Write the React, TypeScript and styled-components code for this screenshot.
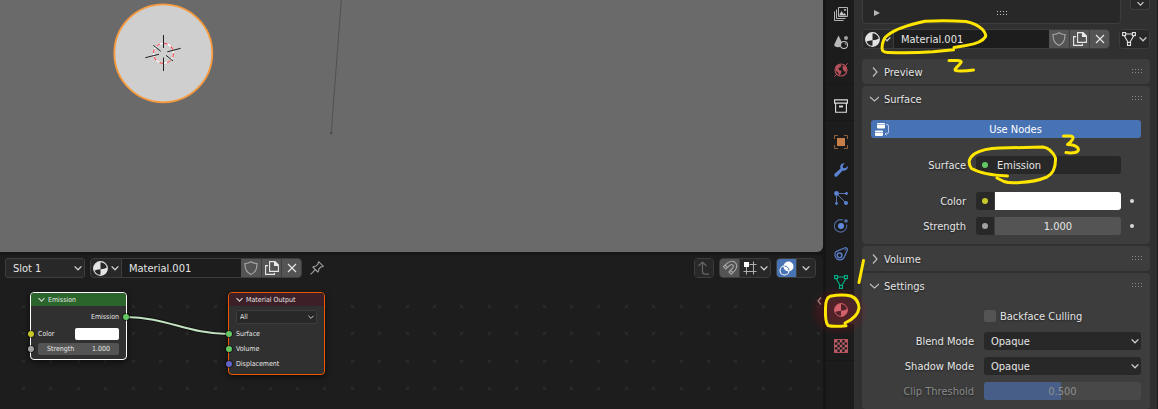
import React from "react";
import styled, { createGlobalStyle, css } from "styled-components";

const GlobalStyle = createGlobalStyle`
  * { box-sizing: border-box; }
  html, body { margin: 0; background: #161616; }
  body, button, input, select {
    font-family: "DejaVu Sans Condensed", "DejaVu Sans", sans-serif;
    font-size: 11px;
    line-height: 14px;
    color: #e5e5e5;
  }
  button, input, select { margin: 0; padding: 0; border: 0; background: none; outline: none; border-radius: 0; }
  svg { display: block; flex: none; }
`;

/* ---------- shell ---------- */

const Window = styled.div`
  display: flex;
  min-height: 100vh;
  overflow: hidden;
`;
const Workspace = styled.main`
  flex: 1;
  min-width: 0;
  display: flex;
  flex-direction: column;
  gap: 3px;
`;
const Viewport = styled.section`
  height: 252px;
  background: #6a6a6a;
  border-bottom-right-radius: 6px;
  overflow: hidden;
`;
const NodeEditor = styled.section`
  flex: 1;
  display: flex;
  flex-direction: column;
  background: #1d1d1d;
  border-radius: 0 6px 0 0;
`;
const EditorHeader = styled.header`
  display: flex;
  align-items: center;
  gap: 5px;
  padding: 3px 7px 3px 5px;
`;
const Spacer = styled.div`
  flex: 1;
`;
const Sidebar = styled.aside`
  position: relative;
  display: flex;
  width: 335px;
  padding-left: 3px;
`;

/* ---------- header widgets ---------- */

const Group = styled.div<{ $width?: number }>`
  display: flex;
  height: 20px;
  border: 1px solid #3d3d3d;
  border-radius: 4px;
  overflow: hidden;
  background: #282828;
  ${(p) => p.$width && css`width: ${p.$width}px;`}
`;
const Cell = styled.button<{ $width?: number; $tone?: "raised" | "active" | "dim" }>`
  display: flex;
  align-items: center;
  justify-content: center;
  gap: 3px;
  width: ${(p) => p.$width ?? 20}px;
  flex: none;
  background: ${(p) => (p.$tone === "raised" ? "#545454" : p.$tone === "active" ? "#4772b3" : "#282828")};
  & + & { border-left: 1px solid #3d3d3d; }
`;
const NameInput = styled.input`
  flex: 1;
  min-width: 0;
  padding: 2px 7px 0;
  background: #1d1d1d;
  border-left: 1px solid #3d3d3d;
`;
const PinButton = styled.button`
  display: flex;
  margin-left: 3px;
`;

/* ---------- selects ---------- */

const SelectBox = styled.div<{ $bordered?: boolean; $width?: number; $small?: boolean }>`
  display: flex;
  align-items: center;
  position: relative;
  height: ${(p) => (p.$small ? 14 : p.$bordered ? 20 : 18)}px;
  background: #282828;
  border-radius: ${(p) => (p.$small ? 2 : 3)}px;
  ${(p) => p.$bordered && css`border: 1px solid #3d3d3d;`}
  ${(p) => (p.$width ? css`width: ${p.$width}px;` : css`flex: 1;`)}
  select {
    appearance: none;
    width: 100%;
    height: 100%;
    padding: 2px 7px 0;
    ${(p) => p.$small && css`padding: 0 3px; font-size: 7px; line-height: 10px;`}
  }
  svg {
    position: absolute;
    right: 2px;
    pointer-events: none;
  }
`;

const Chevron = ({ size = 8 }: { size?: number }) => (
  <svg width={size} height={size} viewBox="0 0 8 8" fill="none" stroke="#d0d0d0" strokeWidth="1.300">
    <path d="M.6 2.400 4 5.800 7.400 2.400" />
  </svg>
);

type SelectProps = { label: string; value: string; bordered?: boolean; width?: number; small?: boolean; id?: string };
const Select = ({ label, value, bordered, width, small, id }: SelectProps) => (
  <SelectBox $bordered={bordered} $width={width} $small={small}>
    <select id={id} aria-label={label} defaultValue={value}>
      <option>{value}</option>
    </select>
    <Chevron size={small ? 6 : 8} />
  </SelectBox>
);

/* ---------- icons ---------- */

const MaterialIcon = ({ color = "#e5e5e5", size = 15 }: { color?: string; size?: number }) => (
  <svg width={size} height={size} viewBox="0 0 14 14" fill="none">
    <circle cx="7" cy="7" r="6.4" stroke={color} strokeWidth="1" />
    <path d="M7 .6V7.8Q3.500 8.200 .9 9A6.500 6.500 0 0 1 7 .6Z" fill={color} />
    <path d="M7 7.800Q10.500 7.600 13.300 6A6.500 6.500 0 0 1 7 13.400Z" fill={color} />
  </svg>
);
const ShieldIcon = () => (
  <svg width="14" height="14" viewBox="0 0 14 14" fill="none" stroke="#a6a6a6" strokeWidth="1.100">
    <path d="M7 .8Q9.500 2.600 13 2.500C13.200 8 11.500 11.500 7 13.500 2.500 11.500 .8 8 1 2.500Q4.500 2.600 7 .8Z" />
  </svg>
);
const CopyIcon = () => (
  <svg width="14" height="14" viewBox="0 0 14 14" fill="none" stroke="#e8e8e8" strokeWidth="1.100">
    <path d="M4.600 .6H10L13.400 4V10.400H4.600Z" />
    <path d="M9.500 .6V4.500H13.400Z" fill="#e8e8e8" />
    <path d="M3 4.600H.6V13.400H9.400V11.800" />
  </svg>
);
const CloseIcon = () => (
  <svg width="10" height="10" viewBox="0 0 10 10" stroke="#e5e5e5" strokeWidth="1.200">
    <path d="M1 1 9 9M9 1 1 9" />
  </svg>
);
const PinIcon = () => (
  <svg width="14" height="14" viewBox="0 0 14 14" fill="none" stroke="#a0a0a0" strokeWidth="1.100">
    <path d="M8.800 .8 13.200 5.200 11.700 6 10.900 5.900 8.700 8.300Q8.900 10.200 7.800 11L2.900 6.200Q3.900 5.100 5.700 5.300L8.100 3.100 8 2.200ZM5.300 8.700.6 13.400" />
  </svg>
);
const MeshIcon = ({ color = "#e5e5e5" }: { color?: string }) => (
  <svg width="14" height="14" viewBox="0 0 14 14" fill="none" stroke={color} strokeWidth="1.100">
    <path d="M3.600 2H10.400M2.300 3.800 6 10.200M11.700 3.800 8 10.200" />
    <rect x=".6" y=".6" width="3" height="3" />
    <rect x="10.400" y=".6" width="3" height="3" />
    <rect x="5.500" y="10.400" width="3" height="3" />
  </svg>
);
const UpIcon = () => (
  <svg width="14" height="14" viewBox="0 0 14 14" fill="none" stroke="#666" strokeWidth="1.200">
    <path d="M1.500 5 5.500 1 9.500 5M5.500 1V10.500Q5.500 13.200 8 13.200H12" />
  </svg>
);
const MagnetIcon = () => (
  <svg width="16" height="16" viewBox="0 0 16 16" fill="none" stroke="#a8a8a8" strokeWidth="1.100">
    <path d="M1.500 6.500 6 2.600C9 .3 12.500 1 14 3.600 15.300 6 14.800 8.300 13 10.400L9.300 14.300 6.900 12 10.500 8.200C11.500 7 11.500 6 10.800 5.200 10 4.300 8.900 4.400 8 5.200L3.700 9ZM3.100 5.200 5.300 7.500M8.500 10.300 10.900 12.600" />
  </svg>
);
const SnapIcon = () => (
  <svg width="14" height="14" viewBox="0 0 14 14" stroke="#b0b0b0" strokeWidth="1">
    <path d="M3.500 6V13.500M10.500 .5V13.500M6.500 3.500H13.500M.5 10.500H13.500" />
    <rect x="1" y="1" width="5" height="5" fill="#fff" stroke="none" />
  </svg>
);
const OverlayIcon = () => (
  <svg width="15" height="15" viewBox="0 0 15 15" fill="none">
    <circle cx="9.500" cy="5.500" r="5" fill="#fff" />
    <circle cx="5.500" cy="9.500" r="4.500" stroke="#fff" strokeWidth="1.100" />
    <path d="M5.500 5A4.500 4.500 0 0 1 10 9.500" stroke="#4772b3" strokeWidth="1" />
  </svg>
);
const NodesIcon = () => (
  <svg width="15" height="15" viewBox="0 0 15 15" fill="none">
    <path d="M3 1H9Q10 1 10 2V2.400H2V2Q2 1 3 1ZM2 3H10V5.500Q10 6.500 9 6.500H3Q2 6.500 2 5.500Z" fill="#fff" />
    <path d="M1 8.500H7Q8 8.500 8 9.500V9.900H0V9.500Q0 8.500 1 8.500ZM0 10.500H8V13Q8 14 7 14H1Q0 14 0 13Z" fill="#fff" />
    <path d="M11 2.500H12Q13.500 2.500 13.500 4V10Q13.500 12 11.500 12H10M11.500 10.500 10 12 11.500 13.500" stroke="#c4d3ec" strokeWidth=".9" />
  </svg>
);

const TabIcon = styled.svg.attrs({ width: 14, height: 14, viewBox: "0 0 14 14", fill: "none" })``;

const tabGroups: { name: string; active?: boolean; icon: React.ReactNode }[][] = [
  [
    {
      name: "View Layer",
      icon: (
        <TabIcon stroke="#b4b4b4">
          <path d="M4.500 .5H13.500V9.500H4.500Z" />
          <path d="M2.500 2.500V11.500H11.500M.5 4.500V13.500H9.500" />
          <path d="M5 8.500 7.500 4 9.500 7 10.500 6 12.500 8.500Z" fill="#c8c8c8" stroke="none" />
          <circle cx="11" cy="3" r="1" fill="#c8c8c8" stroke="none" />
        </TabIcon>
      ),
    },
    {
      name: "Scene",
      icon: (
        <TabIcon>
          <path d="M4.500 .5 8 7.500Q5.500 8.500 6 12 3 12.500 1.200 11.500-.2 10.500 .5 9Z" fill="#b8b8b8" />
          <circle cx="12" cy="3" r="2" fill="#a0a0a0" />
          <circle cx="10" cy="10" r="3.500" stroke="#c4c4c4" strokeWidth="1.100" />
          <path d="M10.500 8Q12 8.500 12 10" stroke="#c4c4c4" strokeWidth=".8" />
        </TabIcon>
      ),
    },
    {
      name: "World",
      icon: (
        <TabIcon>
          <circle cx="7" cy="7" r="6" stroke="#b5515b" strokeWidth="1.100" />
          <path d="M2 3.500Q4 1 6.500 1.500L7.500 3 6 4.500 4.500 5 5 7 7.500 8 7 10.500 5.500 12.500 4 9.500 1.300 7.500ZM9 2.500 12 4 12.800 7.500 11 9 9.500 7.500 8.500 5Z" fill="#b5515b" />
          <path d="M11.500 2.500 13.700 .3M2.500 11.500 .3 13.700" stroke="#b5515b" />
        </TabIcon>
      ),
    },
  ],
  [
    {
      name: "Collection",
      icon: (
        <TabIcon stroke="#e0e0e0" strokeWidth="1.100">
          <path d="M.6 .9H13.400V4.100H.6ZM1.600 4.100V13.200H12.400V4.100" />
          <path d="M5 7.500H9" strokeWidth="1.800" />
        </TabIcon>
      ),
    },
  ],
  [
    {
      name: "Object",
      icon: (
        <TabIcon>
          <rect x="3" y="3" width="8" height="8" fill="#c67f49" />
          <path d="M.5 4V.5H4M10 .5H13.500V4M13.500 10V13.500H10M4 13.500H.5V10" stroke="#8f6039" />
        </TabIcon>
      ),
    },
    {
      name: "Modifiers",
      icon: (
        <TabIcon>
          <path d="M10.800 .3Q7.500 0 6.400 2.500 6 4 6.500 5.400L.7 10.700Q-.3 12 .7 13.200 2 14.200 3.300 13.200L8.600 7.500Q11 8.200 12.700 6.600 14.100 5 13.700 3.100L11.300 5.200 9 4.900 8.700 2.700Z" fill="#5a83d4" />
        </TabIcon>
      ),
    },
    {
      name: "Particles",
      icon: (
        <TabIcon stroke="#5a74aa">
          <path d="M3 2.500H12M2.500 3V12M3 3 11.500 11.500" />
          <g fill="#5a83d4" stroke="none">
            <circle cx="2.500" cy="2.500" r="2.400" />
            <circle cx="12.500" cy="2.500" r="1.400" />
            <circle cx="2.500" cy="12.500" r="1.400" />
            <circle cx="12" cy="12" r="2" />
          </g>
        </TabIcon>
      ),
    },
    {
      name: "Physics",
      icon: (
        <TabIcon>
          <path d="M9 1.200A6.200 6.200 0 1 0 12.600 5.500" stroke="#4f69a0" strokeWidth="1.100" />
          <circle cx="7" cy="7" r="3" fill="#6089dc" />
          <circle cx="12" cy="2" r="1.800" fill="#5272b2" />
        </TabIcon>
      ),
    },
    {
      name: "Object Constraints",
      icon: (
        <TabIcon stroke="#587bc4" strokeWidth="1.200">
          <path d="M2 4.600 10.400 1A2 2 0 0 1 13.200 3.600L9.800 11A5 5 0 1 1 2 4.600Z" />
          <circle cx="5.500" cy="8.300" r="2.400" strokeWidth="1.500" />
          <circle cx="11.300" cy="2.800" r=".7" fill="#587bc4" stroke="none" />
        </TabIcon>
      ),
    },
    { name: "Object Data", icon: <MeshIcon color="#00b386" /> },
    { name: "Material", active: true, icon: <MaterialIcon color="#d4616b" size={14} /> },
  ],
  [
    {
      name: "Texture",
      icon: (
        <TabIcon>
          <rect x=".5" y=".5" width="13" height="13" stroke="#b5515b" />
          <path
            d="M1 1h2.400v2.400H1ZM5.800 1h2.400v2.400H5.800ZM10.600 1H13v2.400h-2.400ZM3.400 3.400h2.400v2.400H3.400ZM8.200 3.400h2.400v2.400H8.200ZM1 5.800h2.400v2.400H1ZM5.800 5.800h2.400v2.400H5.800ZM10.600 5.800H13v2.400h-2.400ZM3.400 8.200h2.400v2.400H3.400ZM8.200 8.200h2.400v2.400H8.200ZM1 10.600h2.400V13H1ZM5.800 10.600h2.400V13H5.800ZM10.600 10.600H13V13h-2.400Z"
            fill="#b9606a"
          />
        </TabIcon>
      ),
    },
  ],
];

/* ---------- property tabs ---------- */

const TabRail = styled.nav`
  display: flex;
  flex-direction: column;
  gap: 8px;
  width: 28px;
  background: #1c1c1c;
`;
const TabGroup = styled.div`
  display: flex;
  flex-direction: column;
  box-shadow: 0 1px 0 #181818;
`;
const Tab = styled.button<{ $active?: boolean }>`
  display: flex;
  align-items: center;
  justify-content: center;
  height: 28px;
  padding-left: 2px;
  background: ${(p) => (p.$active ? "#303030" : "transparent")};
  svg {
    position: relative;
    z-index: 1;
  }
`;

/* ---------- property panels ---------- */

const Properties = styled.div`
  flex: 1;
  min-width: 0;
  display: flex;
  flex-direction: column;
  padding: 0 7px 0 8px;
  background: #303030;
  border-right: 1px solid #1a1a1a;
`;
const SlotArea = styled.div`
  display: flex;
  gap: 9px;
  height: 24px;
`;
const SlotList = styled.div`
  flex: 1;
  display: flex;
  align-items: center;
  gap: 4px;
  padding: 3px 0 0 11px;
  background: #282828;
  border: 1px solid #3d3d3d;
  border-top: 0;
  border-radius: 0 0 4px 4px;
`;
const SlotGrip = styled.div`
  flex: 1;
  display: flex;
  justify-content: center;
`;
const SlotMenu = styled.button`
  display: flex;
  justify-content: center;
  width: 20px;
  height: 10px;
  background: #282828;
  border: 1px solid #3d3d3d;
  border-top: 0;
  border-radius: 0 0 4px 4px;
`;
const MaterialRow = styled.div`
  display: flex;
  gap: 9px;
  padding: 5px 0 10px;
`;
const GrowGroup = styled(Group)`
  flex: 1;
`;
const Panels = styled.div`
  display: flex;
  flex-direction: column;
  gap: 2px;
`;
const Panel = styled.section`
  background: #3d3d3d;
  border-radius: 4px;
`;
const PanelHeader = styled.button`
  display: flex;
  align-items: center;
  gap: 5px;
  width: 100%;
  height: 25px;
  padding: 0 7px;
  text-align: left;
  text-shadow: 0 1px 2px rgba(0, 0, 0, 0.6);
`;
const PanelTitle = styled.span`
  flex: 1;
  padding-top: 2px;
`;
const PanelBody = styled.div`
  display: flex;
  flex-direction: column;
  gap: 7px;
  padding: 9px;
`;
const PropGroup = styled.div`
  display: flex;
  flex-direction: column;
  gap: 18px;
  padding-top: 11px;
`;
const SocketRows = styled.div`
  display: flex;
  flex-direction: column;
  gap: 7px;
`;
const Row = styled.div`
  display: flex;
  align-items: center;
  height: 18px;
`;
const Label = styled.label<{ $width: number; $dim?: boolean }>`
  width: ${(p) => p.$width}px;
  padding: 2px 10px 0 0;
  flex: none;
  text-align: right;
  color: ${(p) => (p.$dim ? "#8a8a8a" : "#e5e5e5")};
  text-shadow: 0 1px 2px rgba(0, 0, 0, 0.5);
`;
const UseNodes = styled.button`
  display: flex;
  align-items: center;
  height: 18px;
  padding-left: 4px;
  border-radius: 3px;
  background: #4772b3;
  color: #fff;
`;
const ButtonText = styled.span`
  flex: 1;
  padding-top: 2px;
  text-align: center;
`;
const Socket = styled.span<{ $color: string }>`
  display: flex;
  align-items: center;
  justify-content: center;
  width: 18px;
  height: 18px;
  flex: none;
  border-radius: 3px 0 0 3px;
  background: #282828;
  &::after {
    content: "";
    width: 6px;
    height: 6px;
    border-radius: 50%;
    background: ${(p) => p.$color};
  }
`;
const ShaderButton = styled.button`
  flex: 1;
  height: 18px;
  padding: 2px 0 0 3px;
  text-align: left;
  background: #282828;
  border-radius: 0 3px 3px 0;
`;
const ColorButton = styled.button`
  flex: 1;
  height: 18px;
  margin-left: 1px;
  background: #fff;
  border-radius: 0 3px 3px 0;
`;
const NumberInput = styled.input`
  flex: 1;
  min-width: 0;
  height: 18px;
  margin-left: 1px;
  text-align: center;
  background: #545454;
  border-radius: 0 3px 3px 0;
`;
const Decorator = styled.span<{ $visible?: boolean }>`
  display: flex;
  justify-content: center;
  width: 20px;
  flex: none;
  padding-left: 2px;
  &::after {
    content: "";
    width: 4px;
    height: 4px;
    border-radius: 50%;
    background: ${(p) => (p.$visible ? "#d8d8d8" : "transparent")};
  }
`;
const CheckLabel = styled.label`
  display: flex;
  align-items: center;
  gap: 4px;
  height: 18px;
  padding-left: 113px;
  text-shadow: 0 1px 2px rgba(0, 0, 0, 0.5);
  input {
    appearance: none;
    width: 12px;
    height: 12px;
    border-radius: 2px;
    background: #545454;
  }
`;
const CheckText = styled.span`
  padding-top: 2px;
`;
const Slider = styled.div`
  position: relative;
  display: flex;
  align-items: center;
  justify-content: center;
  flex: 1;
  height: 18px;
  input {
    appearance: none;
    width: 100%;
    height: 18px;
    border-radius: 3px;
    background: linear-gradient(to right, #475f88 49%, #484848 49%);
  }
  input::-webkit-slider-thumb { appearance: none; width: 0; height: 0; }
  output {
    position: absolute;
    padding-top: 2px;
    color: #8e8e8e;
    pointer-events: none;
  }
`;

const DragDots = ({ color = "#8c8c8c" }: { color?: string }) => (
  <svg width="11" height="5" viewBox="0 0 11 5" fill={color}>
    {[0, 3, 6, 9].map((x) => (
      <g key={x}>
        <rect x={x} y="0" width="1" height="1" />
        <rect x={x} y="3" width="1" height="1" />
      </g>
    ))}
  </svg>
);

const PanelView = ({ title, open, children }: { title: string; open?: boolean; children?: React.ReactNode }) => (
  <Panel>
    <PanelHeader aria-expanded={!!open}>
      <svg width="10" height="10" viewBox="0 0 10 10" fill="none" stroke="#bdbdbd" strokeWidth="1.200">
        <path d={open ? "M1 3 5.500 7 10 3" : "M4 .5 8 5 4 9.500"} />
      </svg>
      <PanelTitle>{title}</PanelTitle>
      <DragDots />
    </PanelHeader>
    {open && <PanelBody>{children}</PanelBody>}
  </Panel>
);

const MaterialCells = ({ label }: { label: string }) => (
  <>
    <Cell $width={30} aria-label="Browse material">
      <MaterialIcon />
      <Chevron />
    </Cell>
    <NameInput aria-label={label} defaultValue="Material.001" />
    <Cell $tone="raised" aria-label="Fake user"><ShieldIcon /></Cell>
    <Cell $tone="raised" aria-label="New material"><CopyIcon /></Cell>
    <Cell $tone="raised" aria-label="Unlink"><CloseIcon /></Cell>
  </>
);

/* ---------- node canvas ---------- */

const Canvas = styled.div`
  position: relative;
  flex: 1;
  min-height: 128px;
  overflow: hidden;
`;
const CanvasDrawing = styled.svg`
  position: absolute;
  inset: 0;
  width: 100%;
  height: 100%;
`;
const RegionToggle = styled.button`
  position: absolute;
  top: 15px;
  right: 0;
`;
const Node = styled.article<{ $x: number; $outline: string }>`
  position: absolute;
  left: ${(p) => p.$x}px;
  top: 11px;
  width: 97px;
  background: #303030;
  border: 1px solid ${(p) => p.$outline};
  border-radius: 4px;
  box-shadow: 0 2px 6px rgba(0, 0, 0, 0.6);
  font-size: 7px;
  line-height: 10px;
`;
const NodeTitle = styled.header<{ $color: string }>`
  display: flex;
  align-items: center;
  gap: 3px;
  height: 13px;
  padding-left: 7px;
  background: ${(p) => p.$color};
  border-radius: 3px 3px 0 0;
`;
const NodeBody = styled.div`
  display: flex;
  flex-direction: column;
  padding: 3px 7px;
`;
const NodeRow = styled.div<{ $align?: "end" }>`
  position: relative;
  display: flex;
  align-items: center;
  justify-content: ${(p) => (p.$align === "end" ? "flex-end" : "space-between")};
  height: 15px;
`;
const NodeSpacer = styled.div`
  height: 2px;
`;
const NodeSocket = styled.span<{ $color: string; $side?: "right" }>`
  position: absolute;
  top: 5px;
  ${(p) => (p.$side === "right" ? "right: -10px;" : "left: -10px;")}
  width: 6px;
  height: 6px;
  border-radius: 50%;
  background: ${(p) => p.$color};
  box-shadow: 0 0 0 1px rgba(0, 0, 0, 0.45);
`;
const NodeSwatch = styled.button`
  width: 44px;
  height: 12px;
  background: #fff;
  border-radius: 2px;
`;
const NodeField = styled.label`
  display: flex;
  align-items: center;
  justify-content: space-between;
  width: 100%;
  height: 12px;
  padding: 0 9px;
  background: #545454;
  border-radius: 2px;
  input {
    width: 24px;
    text-align: right;
    font-size: 7px;
    line-height: 10px;
  }
`;

const columns = Array.from({ length: 90 }, (_, i) => Math.round(22 + i * 27.4));
const rows = Array.from({ length: 30 }, (_, i) => Math.round(24 + i * 27.4));

const NodeCanvas = () => (
  <Canvas>
    <CanvasDrawing>
      {rows.map((y) => columns.map((x) => <rect key={`${x}-${y}`} x={x} y={y} width="3" height="3" fill="#282828" />))}
      <path d="M126 36C166 36 188 53 228 53" fill="none" stroke="#101010" strokeWidth="4" />
      <path d="M126 36C166 36 188 53 228 53" fill="none" stroke="#c2e3c2" strokeWidth="2" />
    </CanvasDrawing>
    <Node $x={30} $outline="#ffffff">
      <NodeTitle $color="#2b652b"><Chevron size={7} />Emission</NodeTitle>
      <NodeBody>
        <NodeRow $align="end">Emission<NodeSocket $color="#63c763" $side="right" /></NodeRow>
        <NodeSpacer />
        <NodeRow>Color<NodeSwatch aria-label="Color" /><NodeSocket $color="#c7c729" /></NodeRow>
        <NodeRow>
          <NodeField>Strength<input defaultValue="1.000" /></NodeField>
          <NodeSocket $color="#a1a1a1" />
        </NodeRow>
      </NodeBody>
    </Node>
    <Node $x={228} $outline="#ed5700">
      <NodeTitle $color="#3d1f28"><Chevron size={7} />Material Output</NodeTitle>
      <NodeBody>
        <NodeRow><Select label="Target" value="All" bordered small /></NodeRow>
        <NodeSpacer />
        <NodeRow>Surface<NodeSocket $color="#63c763" /></NodeRow>
        <NodeRow>Volume<NodeSocket $color="#63c763" /></NodeRow>
        <NodeRow>Displacement<NodeSocket $color="#6363c7" /></NodeRow>
      </NodeBody>
    </Node>
    <RegionToggle aria-label="Show sidebar">
      <svg width="7" height="10" viewBox="0 0 7 10" fill="none" stroke="#b09090" strokeWidth="1.200">
        <path d="M5 1.500 2 5 5 8.500" />
      </svg>
    </RegionToggle>
  </Canvas>
);

/* ---------- 3D scene ---------- */

const Scene = () => (
  <svg width="420" height="252" viewBox="0 0 420 252" fill="none">
    <path d="M341.300 0 331.300 132" stroke="#515151" />
    <circle cx="331.300" cy="133" r="1.300" fill="#4a4a4a" />
    <circle cx="163.300" cy="53.300" r="49" fill="#cfcfcf" stroke="#f79a3e" strokeWidth="1.800" />
    <circle cx="163.500" cy="53.300" r="10" stroke="#fff" strokeWidth="1.200" />
    <circle cx="163.500" cy="53.300" r="10" stroke="#f0505a" strokeWidth="1.200" strokeDasharray="3.930 3.930" />
    <path
      d="M163.500 35V48M163.500 57.500V71M145.300 57.700 159 54.300M167.300 51.800 180.700 48.300M153.300 45.300 160.700 51.200M166 55.300 173 61"
      stroke="#222"
    />
  </svg>
);

/* ---------- hand-drawn notes ---------- */

const Notes = styled.svg`
  position: absolute;
  left: 0;
  top: 0;
  overflow: visible;
  pointer-events: none;
`;

const Annotations = () => (
  <Notes width="335" height="409" viewBox="823 0 335 409" fill="none" stroke="#ffe600" strokeWidth="3" strokeLinecap="round" strokeLinejoin="round">
    <defs>
      <radialGradient id="glow">
        <stop offset="0.350" stopColor="#900818" stopOpacity=".34" />
        <stop offset="0.700" stopColor="#900818" stopOpacity=".2" />
        <stop offset="1" stopColor="#900818" stopOpacity="0" />
      </radialGradient>
    </defs>
    <ellipse cx="839" cy="311" rx="30" ry="25" fill="url(#glow)" stroke="none" />
    <path d="M953.500 49.800 933 51.800Q909 53.500 888 52.400 882 52.500 882 48 882.500 38 888 35 898 27 925 21.300 945 20.200 966 21.500 977 24 982 29 986 33 985.600 36.500 982 43 966 45.600L954 47.500" />
    <path d="M949 60.500H957Q962 60.500 961 62.500 959 65.500 956 68 953.500 70.500 957 70.800 965 71.200 973.500 70" />
    <path d="M1007.500 176Q983 175 971.500 168.500 965.500 160 975 153.500 983 148.500 1000 148L1043 147Q1051 148 1055.500 158 1056 172 1047 177 1035 182 1020 182.500 1009 183.500 1004 181.500L997 178" />
    <path d="M1063.500 136H1070Q1074.500 136.500 1072.500 139.500 1070.500 142.500 1067.500 144.500 1075 144.500 1078 148 1079.500 151.500 1075 152.500 1071 153.300 1066 152.600" />
    <path d="M863.500 260.500 859 282.500" />
    <path d="M846 325.800Q833 327 828 325.500 825 322 825.500 308 825.500 298 830 296.300 842 294 851 296 858.500 299 859 308 858 317 845 323" />
  </Notes>
);

/* ---------- app ---------- */

export default function App() {
  return (
    <>
      <GlobalStyle />
      <Window>
        <Workspace>
          <Viewport><Scene /></Viewport>
          <NodeEditor>
            <EditorHeader>
              <Select label="Material slot" value="Slot 1" bordered width={80} />
              <Group $width={212}><MaterialCells label="Node material name" /></Group>
              <PinButton aria-label="Pin"><PinIcon /></PinButton>
              <Spacer />
              <Group><Cell $width={18} $tone="dim" aria-label="Parent node tree"><UpIcon /></Cell></Group>
              <Group>
                <Cell $width={19} $tone="raised" aria-label="Snap"><MagnetIcon /></Cell>
                <Cell $width={31} aria-label="Snapping mode"><SnapIcon /><Chevron /></Cell>
              </Group>
              <Group>
                <Cell $width={19} $tone="active" aria-label="Overlays"><OverlayIcon /></Cell>
                <Cell $width={19} aria-label="Overlay options"><Chevron /></Cell>
              </Group>
            </EditorHeader>
            <NodeCanvas />
          </NodeEditor>
        </Workspace>

        <Sidebar>
          <TabRail aria-label="Property editors">
            {tabGroups.map((group, i) => (
              <TabGroup key={i}>
                {group.map((tab) => (
                  <Tab key={tab.name} $active={tab.active} aria-label={tab.name}>{tab.icon}</Tab>
                ))}
              </TabGroup>
            ))}
          </TabRail>
          <Properties>
            <SlotArea>
              <SlotList>
                <svg width="6" height="6" viewBox="0 0 6 6" fill="#b8b8b8"><path d="M0 0 6 3 0 6Z" /></svg>
                <SlotGrip><DragDots color="#c8c8c8" /></SlotGrip>
              </SlotList>
              <SlotMenu aria-label="Slot specials"><Chevron size={7} /></SlotMenu>
            </SlotArea>
            <MaterialRow>
              <GrowGroup><MaterialCells label="Material name" /></GrowGroup>
              <Group><Cell $width={29} aria-label="Link material to"><MeshIcon /><Chevron /></Cell></Group>
            </MaterialRow>
            <Panels>
              <PanelView title="Preview" />
              <PanelView title="Surface" open>
                <UseNodes><NodesIcon /><ButtonText>Use Nodes</ButtonText></UseNodes>
                <PropGroup>
                  <Row>
                    <Label as="span" $width={105}>Surface</Label>
                    <Socket $color="#63c763" />
                    <ShaderButton>Emission</ShaderButton>
                    <Decorator />
                  </Row>
                  <SocketRows>
                    <Row>
                      <Label as="span" $width={105}>Color</Label>
                      <Socket $color="#c7c729" />
                      <ColorButton aria-label="Color" />
                      <Decorator $visible />
                    </Row>
                    <Row>
                      <Label htmlFor="strength" $width={105}>Strength</Label>
                      <Socket $color="#a1a1a1" />
                      <NumberInput id="strength" defaultValue="1.000" />
                      <Decorator $visible />
                    </Row>
                  </SocketRows>
                </PropGroup>
              </PanelView>
              <PanelView title="Volume" />
              <PanelView title="Settings" open>
                <CheckLabel><input type="checkbox" /><CheckText>Backface Culling</CheckText></CheckLabel>
                <Row>
                  <Label htmlFor="blend" $width={113}>Blend Mode</Label>
                  <Select id="blend" label="Blend Mode" value="Opaque" />
                </Row>
                <Row>
                  <Label htmlFor="shadow" $width={113}>Shadow Mode</Label>
                  <Select id="shadow" label="Shadow Mode" value="Opaque" />
                </Row>
                <Row>
                  <Label htmlFor="clip" $width={113} $dim>Clip Threshold</Label>
                  <Slider>
                    <input id="clip" type="range" min="0" max="1" step="0.001" defaultValue="0.5" disabled />
                    <output htmlFor="clip">0.500</output>
                  </Slider>
                </Row>
              </PanelView>
            </Panels>
          </Properties>
          <Annotations />
        </Sidebar>
      </Window>
    </>
  );
}
